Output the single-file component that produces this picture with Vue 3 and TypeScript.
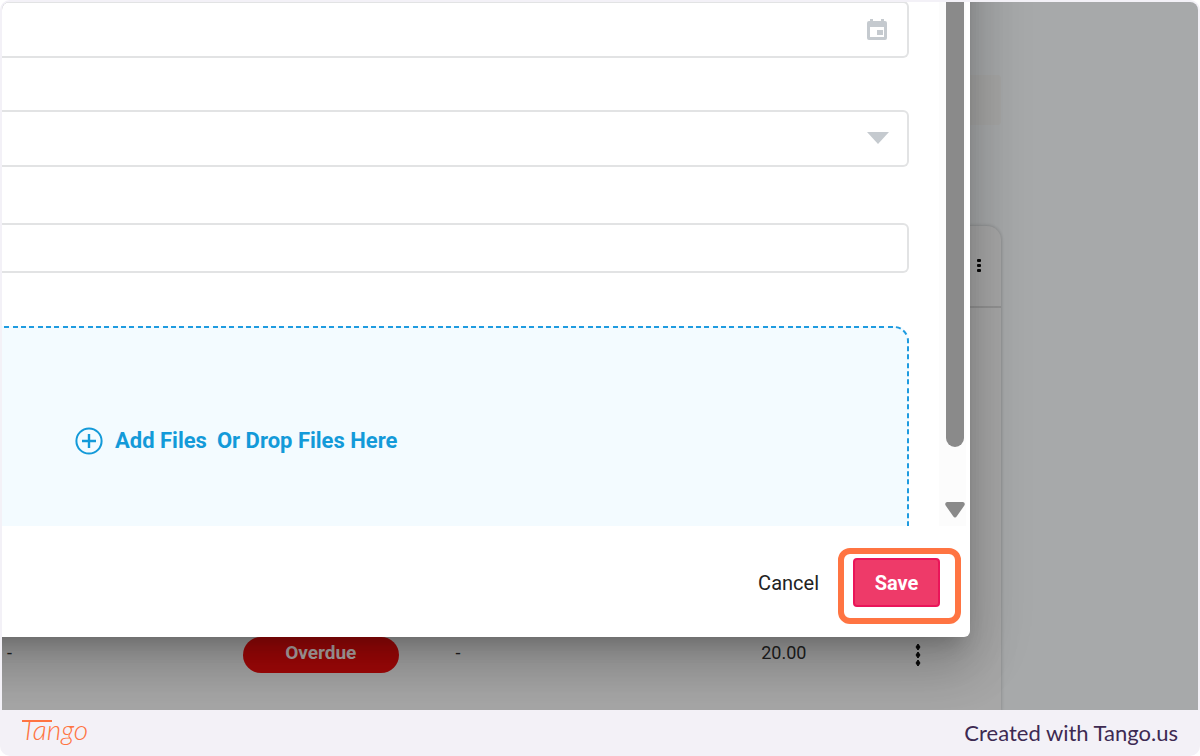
<script setup lang="ts">
import { ref } from 'vue'

interface Row {
  start: string
  status: string
  note: string
  amount: string
}

const rows: Row[] = [{ start: '-', status: 'Overdue', note: '-', amount: '20.00' }]
const date = ref('')
const choice = ref('')
const detail = ref('')
</script>

<template>
  <div class="frame">
    <main class="stage">
      <div class="backdrop">
        <button class="ghost" type="button" aria-label="Filter"></button>
        <section class="card">
          <header class="card-head">
            <button class="icon-btn" type="button" aria-label="Table options">
              <svg width="6" height="14" viewBox="0 0 6 14" fill="#0a0a0a">
                <rect x="1" y="0" width="4" height="3" rx="1" />
                <rect x="1" y="5" width="4" height="3" rx="1" />
                <rect x="1" y="10" width="4" height="3" rx="1" />
              </svg>
            </button>
          </header>
          <table class="table">
            <tbody>
              <tr v-for="row in rows" :key="row.amount">
                <td class="c-start">{{ row.start }}</td>
                <td class="c-status"><span class="pill">{{ row.status }}</span></td>
                <td class="c-note">{{ row.note }}</td>
                <td class="c-amount">{{ row.amount }}</td>
                <td class="c-menu">
                  <button class="icon-btn" type="button" aria-label="Row options">
                    <svg width="8" height="24" viewBox="0 0 8 24" fill="#0a0a0a">
                      <path d="M4 1 6 4 4 7 2 4zM4 9 6 12 4 15 2 12zM4 17 6 20 4 23 2 20z" stroke="#0a0a0a" stroke-linejoin="round" />
                    </svg>
                  </button>
                </td>
              </tr>
            </tbody>
          </table>
        </section>
      </div>

      <form class="dialog" @submit.prevent>
        <div class="body">
          <div class="fields">
            <div class="field date">
              <input v-model="date" type="text" aria-label="Date" />
              <button class="icon-btn" type="button" aria-label="Open calendar">
                <svg width="22" height="24" viewBox="0 0 22 24">
                  <path fill="#c5cacf" fill-rule="evenodd" d="M4 1h3v2h8V1h3v2h1q2 0 2 2v15q0 2-2 2H3q-2 0-2-2V5q0-2 2-2h1zM4 9v10h14V9zM11 12h6v5h-6z" />
                </svg>
              </button>
            </div>
            <div class="field pick">
              <select v-model="choice" aria-label="Category"><option value=""></option></select>
              <svg class="caret" width="22" height="12" viewBox="0 0 22 12"><path fill="#c5cacf" d="M0 0h22L11 12z" /></svg>
            </div>
            <div class="field line">
              <input v-model="detail" type="text" aria-label="Details" />
            </div>
            <div class="drop">
              <svg class="dash" width="100%" height="100%" aria-hidden="true">
                <rect class="dash-rect" x="-20" y="1" height="400" rx="14" />
              </svg>
              <button class="add" type="button">
                <svg width="28" height="28" viewBox="0 0 28 28" fill="none" stroke="#139ad9" stroke-width="2">
                  <circle cx="14" cy="14" r="12.6" />
                  <path d="M14 7v14M7 14h14" stroke-width="2.4" />
                </svg>
                <span>Add Files</span>
              </button>
              <span>Or Drop Files Here</span>
            </div>
          </div>
          <div class="track" aria-hidden="true">
            <div class="thumb"></div>
            <svg width="20" height="16" viewBox="0 0 20 16"><path fill="#8a8a8a" d="M2 0h16q3 1 1 4l-7 10q-2 3-4 0L1 4Q-1 1 2 0z" /></svg>
          </div>
        </div>
        <footer class="actions">
          <button class="cancel" type="button">Cancel</button>
          <div class="save-wrap">
            <button class="save" type="submit">Save</button>
            <span class="ring"></span>
          </div>
        </footer>
      </form>
    </main>

    <footer class="credit">
      <svg class="logo" width="72" height="38" viewBox="0 0 72 38" role="img" aria-label="Tango">
        <line x1="1" y1="8" x2="31" y2="8" stroke="#ff7442" stroke-width="2" />
        <text x="0" y="27" class="logo-text">Tango</text>
      </svg>
      <span>Created with Tango.us</span>
    </footer>
  </div>
</template>

<style>
body {
  margin: 0;
  background: #fff;
}
</style>

<style scoped>
* {
  box-sizing: border-box;
}
.frame {
  min-height: 100vh;
  display: flex;
  flex-direction: column;
  padding: 2px 2px 0;
  background: #f3f1f7;
  border-radius: 10px;
  font-family: Roboto, "Liberation Sans", sans-serif;
}
button {
  font: inherit;
  border: 0;
  padding: 0;
  background: none;
  cursor: pointer;
}
svg {
  display: block;
}
.stage {
  flex: 1;
  display: grid;
  overflow: hidden;
  border-radius: 8px 8px 0 0;
  background: #a7a9aa;
}
.backdrop,
.dialog {
  grid-area: 1 / 1;
  min-width: 0;
}
.backdrop {
  display: flex;
  flex-direction: column;
  padding: 73px 197px 0 0;
}
.ghost {
  width: 160px;
  height: 50px;
  margin-bottom: 101px;
  align-self: flex-end;
  border-radius: 4px;
  background: #a6a6a5;
}
.card {
  flex: 1;
  display: flex;
  flex-direction: column;
  justify-content: space-between;
  border-radius: 0 14px 0 0;
  background: #a7a7a7;
  box-shadow: 0 0 3px 1px rgba(0, 0, 0, 0.14);
}
.card-head {
  display: flex;
  justify-content: flex-end;
  align-items: center;
  height: 82px;
  padding-right: 19px;
  border-bottom: 2px solid #939393;
}
.table {
  width: 100%;
  table-layout: fixed;
  border-collapse: collapse;
  margin-bottom: 37px;
  font-size: 18px;
  line-height: 32px;
  color: #222;
}
td {
  padding: 0;
  height: 36px;
  vertical-align: top;
}
.c-start {
  width: 24%;
  padding-left: 5px;
}
.c-status {
  width: 21%;
  padding-left: 1px;
}
.c-note {
  width: 31%;
  padding-left: 4px;
}
.c-menu {
  width: 9%;
  padding-left: 3px;
  vertical-align: middle;
}
.c-menu .icon-btn {
  display: block;
}
.pill {
  display: block;
  width: 156px;
  height: 36px;
  border-radius: 18px;
  background: #a40808;
  color: #b5abab;
  font-size: 19px;
  font-weight: 700;
  text-align: center;
}
.dialog {
  position: relative;
  display: flex;
  flex-direction: column;
  margin: -100px 228px 73px -100px;
  padding: 100px 0 0 100px;
  background: #fff;
  border-radius: 6px;
  box-shadow:
    0 14px 20px -9px rgba(0, 0, 0, 0.2),
    0 31px 49px 4px rgba(0, 0, 0, 0.14),
    0 12px 60px 10px rgba(0, 0, 0, 0.12);
}
.body {
  flex: 1;
  display: flex;
  gap: 30px;
  padding-right: 4px;
  overflow: hidden;
}
.fields {
  flex: 1;
  display: flex;
  flex-direction: column;
}
.field {
  position: relative;
  display: flex;
  align-items: center;
  height: 57px;
  border: 2px solid #e2e3e4;
  border-left: 0;
  border-radius: 0 6px 6px 0;
}
.date {
  margin-top: -1px;
  padding-right: 19px;
}
.pick {
  margin-top: 52px;
}
.line {
  height: 50px;
  margin-top: 56px;
}
.field input,
.field select {
  flex: 1;
  height: 100%;
  min-width: 0;
  padding: 0 16px;
  border: 0;
  outline: 0;
  background: none;
  appearance: none;
  font: inherit;
  font-size: 20px;
}
.caret {
  position: absolute;
  right: 18px;
  top: 20px;
  pointer-events: none;
}
.drop {
  position: relative;
  flex: 1;
  display: flex;
  align-items: center;
  gap: 10px;
  margin-top: 53px;
  padding: 30px 0 0 73px;
  border-top-right-radius: 14px;
  background: #f3fbff;
  color: #139ad9;
  font-size: 22px;
  line-height: 28px;
  font-weight: 700;
}
.dash {
  position: absolute;
  inset: 0;
}
.dash-rect {
  width: calc(100% + 19px);
  fill: none;
  stroke: #1e9be0;
  stroke-width: 2;
  stroke-dasharray: 5 3 5 4 5 3;
}
.add {
  position: relative;
  display: flex;
  align-items: center;
  gap: 12px;
  color: inherit;
}
.track {
  flex: none;
  display: flex;
  flex-direction: column;
  align-items: center;
  justify-content: space-between;
  width: 27px;
  padding: 0 0 8px 4px;
  background: #fcfcfc;
}
.thumb {
  width: 18px;
  height: 445px;
  border-radius: 0 0 9px 9px;
  background: #8a8a8a;
}
.actions {
  display: flex;
  justify-content: flex-end;
  align-items: center;
  gap: 34px;
  padding: 32px 30px 30px 0;
  font-size: 20px;
}
.cancel {
  color: #222;
  font-weight: 400;
}
.save-wrap {
  position: relative;
}
.save {
  display: block;
  width: 87px;
  height: 49px;
  border: 2px solid #ea1559;
  border-radius: 4px;
  background: #ee3a69;
  color: #fff;
  font-weight: 700;
}
.ring {
  position: absolute;
  inset: -10px -21px -17px -15px;
  border: 6px solid #ff7442;
  border-radius: 12px;
  pointer-events: none;
}
.credit {
  display: flex;
  justify-content: space-between;
  align-items: center;
  height: 46px;
  padding: 0 20px 2px 19px;
  color: #3d2a52;
  font-family: Lato, "Liberation Sans", sans-serif;
  font-size: 22px;
}
.logo-text {
  font-family: Lato, "Liberation Sans", sans-serif;
  font-size: 28px;
  font-style: italic;
  font-weight: 300;
  fill: #ff7442;
}
</style>
